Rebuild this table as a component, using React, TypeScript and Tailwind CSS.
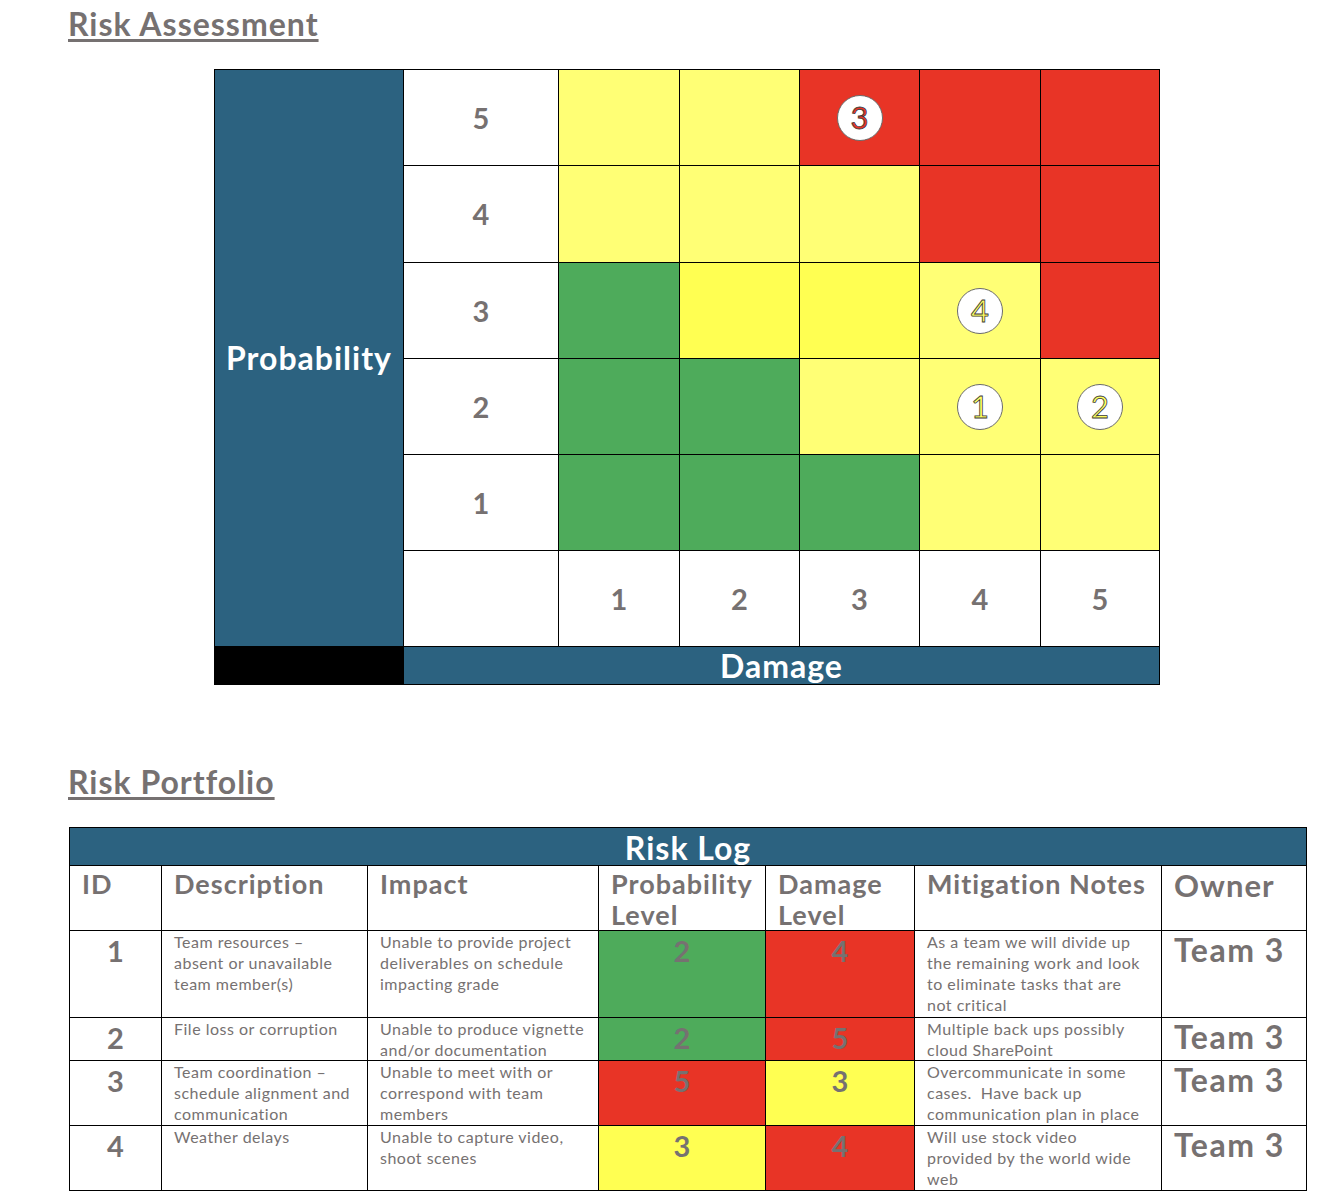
const BLUE = 'bg-[#2c6280]';

type Cell = 'Y' | 'B' | 'R' | 'G';

const cellBg: Record<Cell, string> = {
  Y: 'bg-[#ffff75]',
  B: 'bg-[#ffff52]',
  R: 'bg-[#e83426]',
  G: 'bg-[#4eab5b]',
};

// rows top (5) to bottom (1)
const matrix: { label: string; cells: Cell[] }[] = [
  { label: '5', cells: ['Y', 'Y', 'R', 'R', 'R'] },
  { label: '4', cells: ['Y', 'Y', 'Y', 'R', 'R'] },
  { label: '3', cells: ['G', 'B', 'B', 'Y', 'R'] },
  { label: '2', cells: ['G', 'G', 'Y', 'Y', 'Y'] },
  { label: '1', cells: ['G', 'G', 'G', 'Y', 'Y'] },
];

// risk markers keyed by "row-col"
const markers: Record<string, { n: string; color: string }> = {
  '0-2': { n: '3', color: 'text-[#e83426]' },
  '2-3': { n: '4', color: 'text-[#ffff60]' },
  '3-3': { n: '1', color: 'text-[#ffff60]' },
  '3-4': { n: '2', color: 'text-[#ffff60]' },
};

function Marker({ n, color }: { n: string; color: string }) {
  return (
    <div className="flex h-[46px] w-[46px] items-center justify-center rounded-full border border-[#6b6b6b] bg-white">
      <span
        className={`${color} text-[31px] leading-none font-normal [-webkit-text-stroke:0.8px_#3a3a3a]`}>
        {n}
      </span>
    </div>
  );
}

function RiskMatrix() {
  return (
    <div className="ml-[146px] grid w-[946px] grid-cols-[188px_154px_120px_119px_119px_120px_118px] grid-rows-[95px_96px_95px_95px_95px_95px_37px] gap-px border border-black bg-black">
      <div
        className={`${BLUE} row-span-6 flex items-center justify-center text-[32px] font-bold tracking-[1px] text-white`}>
        Probability
      </div>
      {matrix.map((row, r) => (
        <div key={row.label} className="contents">
          <div className="flex items-center justify-center bg-white text-[29px] font-bold text-[#767171]">
            {row.label}
          </div>
          {row.cells.map((c, ci) => {
            const m = markers[`${r}-${ci}`];
            return (
              <div
                key={ci}
                className={`${cellBg[c]} flex items-center justify-center`}>
                {m && <Marker n={m.n} color={m.color} />}
              </div>
            );
          })}
        </div>
      ))}
      <div className="bg-white" />
      {['1', '2', '3', '4', '5'].map((n) => (
        <div
          key={n}
          className="flex items-center justify-center bg-white text-[29px] font-bold text-[#767171]">
          {n}
        </div>
      ))}
      <div className="bg-black" />
      <div
        className={`${BLUE} col-span-6 flex items-center justify-center text-[32px] leading-none font-bold tracking-[1px] text-white`}>
        Damage
      </div>
    </div>
  );
}

interface Risk {
  id: string;
  desc: string[];
  impact: string[];
  prob: { n: string; bg: string };
  dmg: { n: string; bg: string };
  notes: string[];
  h: string;
}

const risks: Risk[] = [
  {
    id: '1',
    desc: ['Team resources –', 'absent or unavailable', 'team member(s)'],
    impact: ['Unable to provide project', 'deliverables on schedule', 'impacting grade'],
    prob: { n: '2', bg: 'bg-[#4eab5b]' },
    dmg: { n: '4', bg: 'bg-[#e83426]' },
    notes: ['As a team we will divide up', 'the remaining work and look', 'to eliminate tasks that are', 'not critical'],
    h: 'h-[87px]',
  },
  {
    id: '2',
    desc: ['File loss or corruption'],
    impact: ['Unable to produce vignette', 'and/or documentation'],
    prob: { n: '2', bg: 'bg-[#4eab5b]' },
    dmg: { n: '5', bg: 'bg-[#e83426]' },
    notes: ['Multiple back ups possibly', 'cloud SharePoint'],
    h: 'h-[43px]',
  },
  {
    id: '3',
    desc: ['Team coordination –', 'schedule alignment and', 'communication'],
    impact: ['Unable to meet with or', 'correspond with team', 'members'],
    prob: { n: '5', bg: 'bg-[#e83426]' },
    dmg: { n: '3', bg: 'bg-[#ffff52]' },
    notes: ['Overcommunicate in some', 'cases.\u00a0 Have back up', 'communication plan in place'],
    h: 'h-[65px]',
  },
  {
    id: '4',
    desc: ['Weather delays'],
    impact: ['Unable to capture video,', 'shoot scenes'],
    prob: { n: '3', bg: 'bg-[#ffff52]' },
    dmg: { n: '4', bg: 'bg-[#e83426]' },
    notes: ['Will use stock video', 'provided by the world wide', 'web'],
    h: 'h-[65px]',
  },
];

function Lines({ lines }: { lines: string[] }) {
  return (
    <div className="text-[16px] leading-[21px] tracking-[0.5px]">
      {lines.map((l) => (
        <div key={l} className="whitespace-pre">
          {l}
        </div>
      ))}
    </div>
  );
}

function RiskLog() {
  const th =
    'border border-black px-3 pt-0.5 text-left align-top text-[27px] leading-[31px] font-bold tracking-[1px]';
  const td = 'border border-black px-3 align-top';
  const num =
    'border border-black pt-1 text-center align-top text-[29px] leading-[32px] font-bold';
  return (
    <table className="w-[1237px] table-fixed border-collapse border border-black text-[#767171]">
      <colgroup>
        <col className="w-[92px]" />
        <col className="w-[206px]" />
        <col className="w-[231px]" />
        <col className="w-[167px]" />
        <col className="w-[149px]" />
        <col className="w-[247px]" />
        <col className="w-[145px]" />
      </colgroup>
      <thead>
        <tr className="h-[38px]">
          <th
            colSpan={7}
            className={`${BLUE} border border-black text-center align-bottom text-[32px] leading-[34px] font-bold tracking-[1px] text-white`}>
            Risk Log
          </th>
        </tr>
        <tr className="h-[65px]">
          <th className={th}>ID</th>
          <th className={th}>Description</th>
          <th className={th}>Impact</th>
          <th className={th}>
            Probability
            <br />
            Level
          </th>
          <th className={th}>
            Damage
            <br />
            Level
          </th>
          <th className={th}>Mitigation Notes</th>
          <th className={`${th} pt-1 text-[31px]`}>Owner</th>
        </tr>
      </thead>
      <tbody>
        {risks.map((r) => (
          <tr key={r.id} className={r.h}>
            <td className={num}>{r.id}</td>
            <td className={td}>
              <Lines lines={r.desc} />
            </td>
            <td className={td}>
              <Lines lines={r.impact} />
            </td>
            <td className={`${num} ${r.prob.bg}`}>{r.prob.n}</td>
            <td className={`${num} ${r.dmg.bg}`}>{r.dmg.n}</td>
            <td className={td}>
              <Lines lines={r.notes} />
            </td>
            <td className={`${td} pt-0.5 text-[32px] leading-[34px] font-bold tracking-[1.5px]`}>
              Team 3
            </td>
          </tr>
        ))}
      </tbody>
    </table>
  );
}

export default function App() {
  return (
    <div className="min-h-[1204px] w-[1328px] bg-white pl-[68px] font-[Lato,sans-serif]">
      <h1 className="pt-1.5 text-[32px] leading-[36px] font-bold tracking-[1px] text-[#767171] underline decoration-[3px] underline-offset-[3px]">
        Risk Assessment
      </h1>
      <div className="mt-[27px]">
        <RiskMatrix />
      </div>
      <h2 className="mt-[79px] text-[32px] leading-[36px] font-bold tracking-[1px] text-[#767171] underline decoration-[3px] underline-offset-[3px]">
        Risk Portfolio
      </h2>
      <div className="mt-[27px] pl-px">
        <RiskLog />
      </div>
    </div>
  );
}
